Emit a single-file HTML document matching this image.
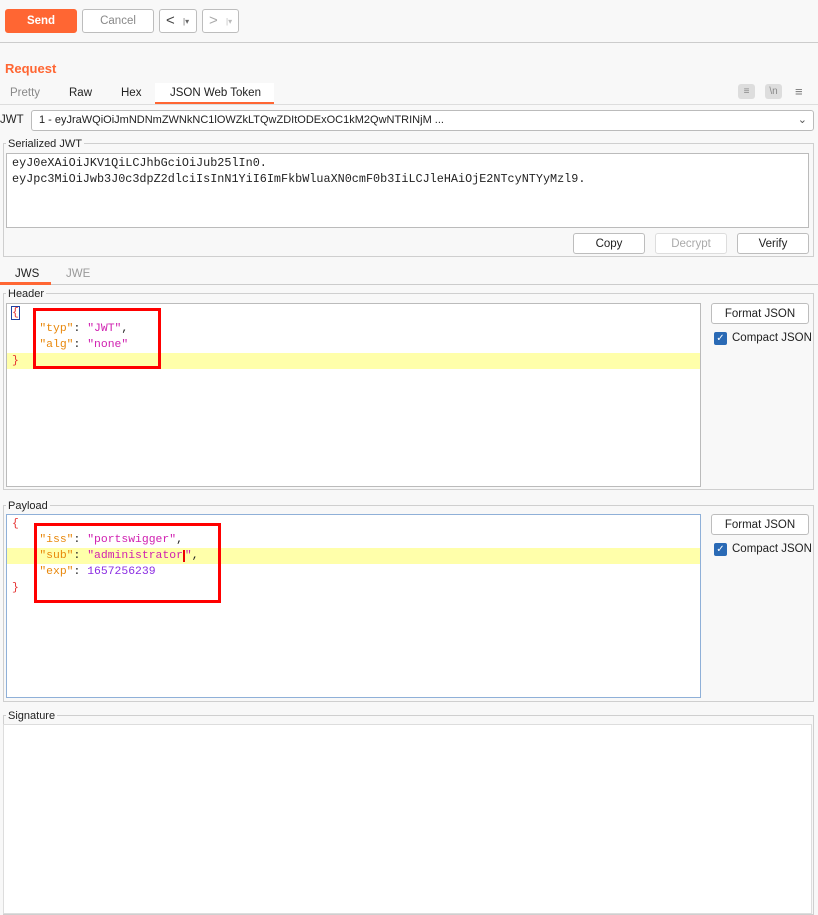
<!DOCTYPE html>
<html><head><meta charset="utf-8"><style>
*{box-sizing:border-box;margin:0;padding:0}
body{width:818px;height:900px;background:#f8f8f8;font-family:"Liberation Sans",sans-serif;font-size:11.5px;color:#222;position:relative;overflow:hidden}
.a{position:absolute}
.btn{position:absolute;border:1px solid #bdbdbd;border-radius:3px;background:#fff;text-align:center;font-size:11.5px;line-height:20px;color:#222}
.grp{position:absolute;border:1px solid #cfcfcf}
.leg{position:absolute;background:#f8f8f8;padding:0 2px;font-size:11px;line-height:12px;color:#222}
.ed{position:absolute;background:#fff;border:1px solid #bbb}
.code{position:absolute;font-family:"Liberation Mono",monospace;font-size:11.4px;line-height:16px;white-space:pre}
.k{color:#e8870a}.s{color:#d020b0}.n{color:#8a2be2}.b{color:#e53030}
.red{position:absolute;border:3px solid #f00}
.hl{position:absolute;background:#ffffaa}
.cb{position:absolute;width:13px;height:13px;background:#2a6ab5;border-radius:2px;color:#fff;font-size:10px;line-height:13px;text-align:center}
</style></head><body>
<div class="btn" style="left:5px;top:9px;width:72px;height:24px;background:#ff6633;border-color:#ff6633;color:#fff;font-weight:bold;line-height:22px">Send</div>
<div class="btn" style="left:82px;top:9px;width:72px;height:24px;color:#888;line-height:22px">Cancel</div>
<div class="btn" style="left:159px;top:9px;width:38px;height:24px;line-height:21px;color:#444;font-size:15px;text-align:left;padding-left:6px">&lt;<span style="font-size:8px;position:absolute;left:23px;top:1px;color:#666">|▾</span></div>
<div class="btn" style="left:202px;top:9px;width:37px;height:24px;line-height:21px;color:#aaa;font-size:15px;text-align:left;padding-left:6px">&gt;<span style="font-size:8px;position:absolute;left:23px;top:1px;color:#bbb">|▾</span></div>
<div class="a" style="left:0;top:42px;width:818px;height:1px;background:#ccc"></div>
<div class="a" style="left:5px;top:61px;color:#ff6633;font-weight:bold;font-size:13px">Request</div>
<div class="a" style="left:155px;top:83px;width:119px;height:21px;background:#fff;border-bottom:2px solid #ff6633"></div>
<div class="a" style="left:10px;top:87px;color:#888">Pretty</div>
<div class="a" style="left:69px;top:87px">Raw</div>
<div class="a" style="left:121px;top:87px">Hex</div>
<div class="a" style="left:170px;top:87px">JSON Web Token</div>
<div class="a" style="left:0;top:104px;width:818px;height:1px;background:#ddd"></div>
<div class="a" style="left:738px;top:84px;width:17px;height:15px;background:#ddd;border-radius:3px;color:#888;font-size:10px;text-align:center;line-height:15px">≡</div>
<div class="a" style="left:765px;top:84px;width:17px;height:15px;background:#ddd;border-radius:3px;color:#888;font-size:10px;text-align:center;line-height:15px">\n</div>
<div class="a" style="left:795px;top:84px;color:#777;font-size:13px">≡</div>
<div class="a" style="left:0;top:114px">JWT</div>
<div class="a" style="left:31px;top:110px;width:783px;height:21px;background:#fff;border:1px solid #bbb;border-radius:3px;padding-left:7px;line-height:19px;font-size:11px">1 - eyJraWQiOiJmNDNmZWNkNC1lOWZkLTQwZDItODExOC1kM2QwNTRINjM ...<span style="position:absolute;right:6px;top:0;color:#555">&#8964;</span></div>
<div class="grp" style="left:3px;top:143px;width:811px;height:114px"></div>
<div class="leg" style="left:6px;top:138px">Serialized JWT</div>
<div class="ed" style="left:6px;top:153px;width:803px;height:75px"></div>
<div class="code" style="left:12px;top:155px;font-size:11.8px;line-height:16px;color:#222">eyJ0eXAiOiJKV1QiLCJhbGciOiJub25lIn0.
eyJpc3MiOiJwb3J0c3dpZ2dlciIsInN1YiI6ImFkbWluaXN0cmF0b3IiLCJleHAiOjE2NTcyNTYyMzl9.</div>
<div class="btn" style="left:573px;top:233px;width:72px;height:21px">Copy</div>
<div class="btn" style="left:655px;top:233px;width:72px;height:21px;color:#aaa;border-color:#ddd">Decrypt</div>
<div class="btn" style="left:737px;top:233px;width:72px;height:21px">Verify</div>
<div class="a" style="left:0;top:282px;width:51px;height:3px;background:#ff6633"></div>
<div class="a" style="left:15px;top:268px">JWS</div>
<div class="a" style="left:66px;top:268px;color:#999">JWE</div>
<div class="a" style="left:51px;top:284px;width:767px;height:1px;background:#ccc"></div>
<div class="grp" style="left:3px;top:293px;width:811px;height:197px"></div>
<div class="leg" style="left:6px;top:288px">Header</div>
<div class="ed" style="left:6px;top:303px;width:695px;height:184px"></div>
<div class="hl" style="left:7px;top:353px;width:693px;height:16px"></div>
<div class="code" style="left:12px;top:305px"><span class="b" style="outline:1px solid #2040a0">{</span>
    <span class="k">"typ"</span>: <span class="s">"JWT"</span>,
    <span class="k">"alg"</span>: <span class="s">"none"</span>
<span class="b">}</span></div>
<div class="red" style="left:33px;top:308px;width:128px;height:61px"></div>
<div class="btn" style="left:711px;top:303px;width:98px;height:21px">Format JSON</div>
<div class="cb" style="left:714px;top:332px">✓</div>
<div class="a" style="left:732px;top:332px">Compact JSON</div>
<div class="grp" style="left:3px;top:505px;width:811px;height:197px"></div>
<div class="leg" style="left:6px;top:500px">Payload</div>
<div class="ed" style="left:6px;top:514px;width:695px;height:184px;border-color:#8fb0d8"></div>
<div class="hl" style="left:7px;top:548px;width:693px;height:16px"></div>
<div class="code" style="left:12px;top:516px"><span class="b">{</span>
    <span class="k">"iss"</span>: <span class="s">"portswigger"</span>,
    <span class="k">"sub"</span>: <span class="s">"administrator</span><span style="border-left:2px solid #e00"></span><span class="s">"</span>,
    <span class="k">"exp"</span>: <span class="n">1657256239</span>
<span class="b">}</span></div>
<div class="red" style="left:34px;top:523px;width:187px;height:80px"></div>
<div class="btn" style="left:711px;top:514px;width:98px;height:21px">Format JSON</div>
<div class="cb" style="left:714px;top:543px">✓</div>
<div class="a" style="left:732px;top:543px">Compact JSON</div>
<div class="grp" style="left:3px;top:715px;width:811px;height:200px"></div>
<div class="leg" style="left:6px;top:710px">Signature</div>
<div class="ed" style="left:3px;top:724px;width:809px;height:190px;border-color:#ddd"></div>
</body></html>
